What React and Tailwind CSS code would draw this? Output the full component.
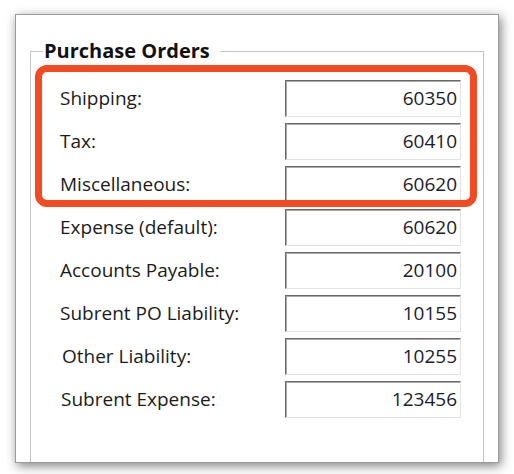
import React from "react";

const rows = [
  ["Shipping:", "60350"],
  ["Tax:", "60410"],
  ["Miscellaneous:", "60620"],
  ["Expense (default):", "60620"],
  ["Accounts Payable:", "20100"],
  ["Subrent PO Liability:", "10155"],
  ["Other Liability:", "10255"],
  ["Subrent Expense:", "123456"],
];

export default function App() {
  return (
    <div
      className="relative w-[514px] h-[474px] bg-white overflow-hidden"
      style={{ fontFamily: '"Open Sans", "Noto Sans", sans-serif' }}
    >
      <div className="ml-[15px] mt-[14px] w-[484px] h-[449px] border border-[#9c9c9c] bg-white overflow-hidden shadow-[2px_3px_10px_rgba(0,0,0,0.5)]">
        <fieldset className="ml-[14px] mt-[24px] w-[454px] h-[480px] border border-[#c4c4c4] pl-[29px] pt-[17px]">
          <legend className="ml-[-17px] pl-[1px] pr-[10px] text-[20px] leading-[24px] font-bold text-[#111]">
            Purchase Orders
          </legend>
          <div className="flex flex-col gap-[6px]">
            {rows.map(([label, value], i) => (
              <div key={i} className="flex items-center h-[37px]">
                <div
                  className={
                    "w-[225px] text-[19px] text-[#1b1b1b] " +
                    (i === 6 ? "pl-[2px]" : i === 7 ? "pl-[1px]" : "")
                  }
                >
                  {label}
                </div>
                <div className="w-[176px] h-[37px] border-t border-l border-[#6a6a6a] border-r-[#e2e2e2] border-b-[#e2e2e2] border-r border-b shadow-[inset_1px_1px_0_#a8a8a8] flex items-center justify-end pr-[3px] text-[19px] text-[#1b1b2b]">
                  {value}
                </div>
              </div>
            ))}
          </div>
        </fieldset>
      </div>
      <div className="absolute left-[35px] top-[65px] w-[442px] h-[142px] border-[7px] border-[#f24a22] rounded-[12px]" />
    </div>
  );
}
